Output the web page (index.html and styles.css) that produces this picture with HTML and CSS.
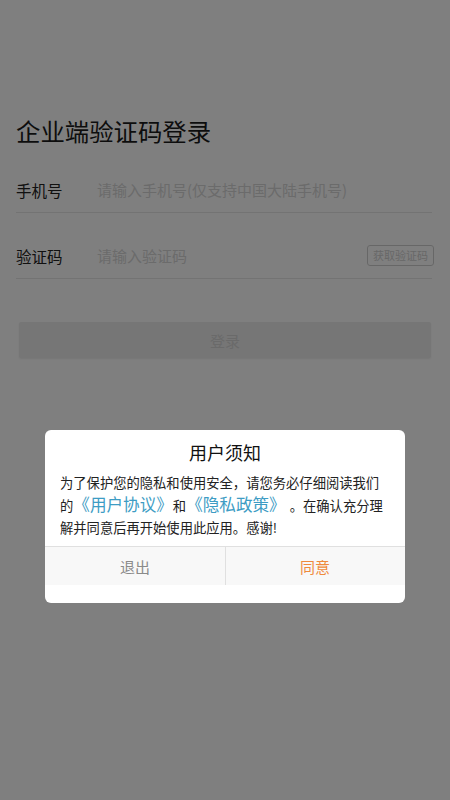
FILE: index.html
```html
<!DOCTYPE html>
<html lang="zh-CN">
<head>
<meta charset="utf-8">
<title>企业端验证码登录</title>
<link rel="stylesheet" href="styles.css">
</head>
<body>
<main class="page">
  <h1 class="title">企业端验证码登录</h1>
  <div class="row">
    <span class="label">手机号</span>
    <span class="placeholder">请输入手机号(仅支持中国大陆手机号)</span>
  </div>
  <div class="row">
    <span class="label">验证码</span>
    <span class="placeholder grow">请输入验证码</span>
    <span class="code-btn">获取验证码</span>
  </div>
  <div class="login">登录</div>
</main>
<div class="overlay">
  <div class="dialog">
    <div class="d-title">用户须知</div>
    <p class="d-body">为了保护您的隐私和使用安全，请您务必仔细阅读我们的<span class="link">《用户协议》</span>和<span class="link">《隐私政策》</span><span class="stop">。</span>在确认充分理解并同意后再开始使用此应用。感谢!</p>
    <div class="d-actions">
      <div class="d-btn quit">退出</div>
      <div class="d-btn agree">同意</div>
    </div>
  </div>
</div>
</body>
</html>
```
FILE: styles.css
```css
html, body {
  margin: 0;
  padding: 0;
  background: #ffffff;
  font-family: "Noto Sans CJK SC", "Noto Sans", sans-serif;
  text-spacing-trim: space-all;
}
.page {
  padding: 115px 18px 0 16px;
  height: 800px;
  box-sizing: border-box;
}
.title {
  margin: 0;
  font-size: 24.4px;
  line-height: 32px;
  font-weight: 400;
  color: #1a1a1a;
}
.row {
  display: flex;
  align-items: center;
  height: 66px;
  box-sizing: border-box;
  padding: 31px 0 11px 0;
  border-bottom: 1px solid #e6e6e6;
}
.label {
  width: 81px;
  flex: none;
  font-size: 15.5px;
  line-height: 24px;
  color: #222;
}
.placeholder {
  font-size: 15px;
  line-height: 24px;
  color: #d6d6d6;
  white-space: nowrap;
}
.grow { flex: 1; }
.code-btn {
  font-size: 11px;
  line-height: 19px;
  padding: 0 5px;
  margin-right: -2px;
  border: 1px solid #cfcfcf;
  border-radius: 3px;
  color: #cfcfcf;
}
.login {
  margin: 43px 1px 0 3px;
  height: 36px;
  background: #ececec;
  border-radius: 2px;
  color: #d4d4d4;
  font-size: 15px;
  display: flex;
  align-items: center;
  justify-content: center;
  box-shadow: 0 1px 2px rgba(0,0,0,0.08);
}
.overlay {
  position: fixed;
  inset: 0;
  background: rgba(0,0,0,0.5);
  display: flex;
  flex-direction: column;
  align-items: center;
  padding-top: 430px;
  box-sizing: border-box;
}
.dialog {
  width: 360px;
  background: #fff;
  border-radius: 6px;
  padding: 10px 0 18px;
  box-sizing: border-box;
}
.d-title {
  text-align: center;
  font-size: 18px;
  line-height: 24px;
  color: #111;
}
.d-body {
  margin: 8px 0 0;
  padding: 0 15px 7px;
  font-size: 13.3px;
  line-height: 22px;
  color: #222;
}
.link {
  color: #3d9cc4;
  font-size: 16.6px;
  line-height: 20px;
}
.stop {
  margin-left: 4px;
}
.d-actions {
  display: flex;
  height: 38px;
  border-top: 1px solid #e0e0e0;
  background: #f8f8f8;
}
.d-btn {
  flex: 1;
  display: flex;
  align-items: center;
  justify-content: center;
  font-size: 15px;
}
.quit {
  color: #8a8a8a;
  border-right: 1px solid #e0e0e0;
  margin-right: -1px;
}
.agree {
  color: #ef8a3d;
}
```
